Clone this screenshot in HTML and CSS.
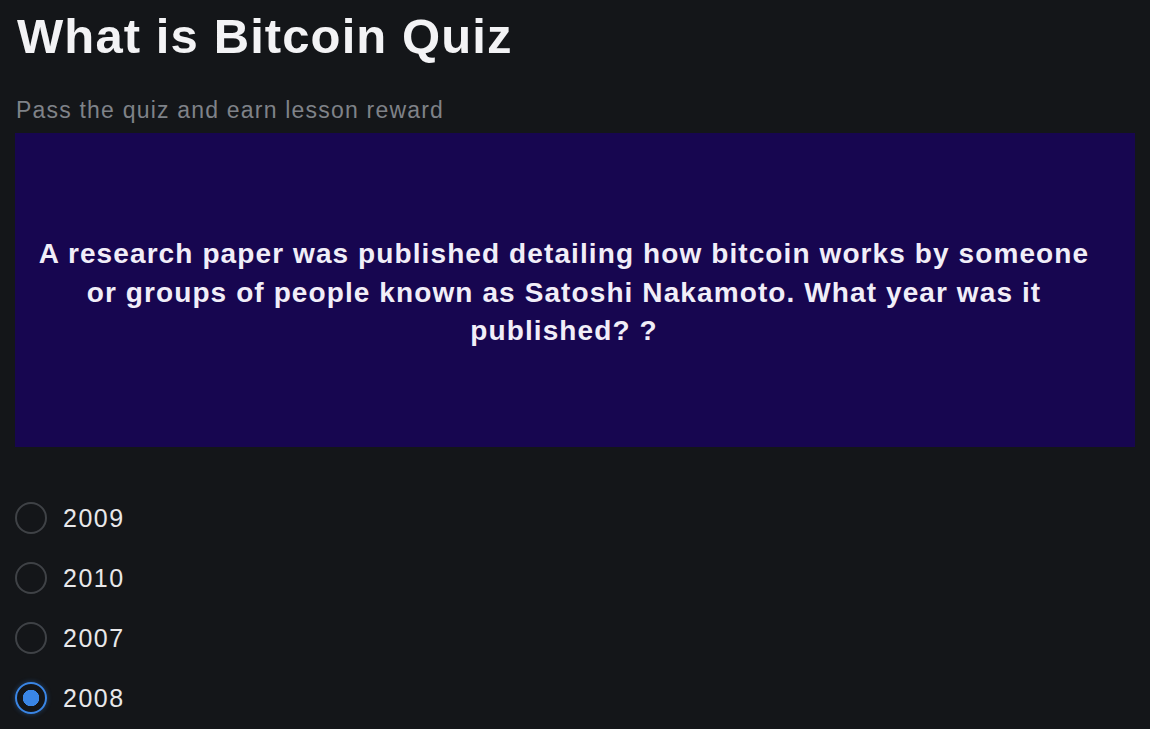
FILE: index.html
```html
<!DOCTYPE html>
<html lang="en">
<head>
<meta charset="utf-8">
<title>What is Bitcoin Quiz</title>
<link rel="stylesheet" href="styles.css">
</head>
<body>
<main class="quiz">
  <h1 class="quiz-title">What is Bitcoin Quiz</h1>
  <p class="quiz-subtitle">Pass the quiz and earn lesson reward</p>
  <section class="question-card">
    <p class="question-text">A research paper was published detailing how bitcoin works by someone or groups of people known as Satoshi Nakamoto. What year was it published? ?</p>
  </section>
  <ul class="options">
    <li class="option"><span class="radio"></span><span class="option-label">2009</span></li>
    <li class="option"><span class="radio"></span><span class="option-label">2010</span></li>
    <li class="option"><span class="radio"></span><span class="option-label">2007</span></li>
    <li class="option"><span class="radio radio-checked"></span><span class="option-label">2008</span></li>
  </ul>
</main>
</body>
</html>
```

FILE: styles.css
```css
html, body {
  margin: 0;
  padding: 0;
  background: #141619;
}
body {
  font-family: "Liberation Sans", Arial, Helvetica, sans-serif;
  color: #f2f2f4;
}
.quiz {
  padding: 7px 15px 0 15px;
}
.quiz-title {
  margin: 0;
  font-size: 49px;
  line-height: 58px;
  font-weight: 700;
  letter-spacing: 1.1px;
  color: #f3f3f5;
  padding-left: 2px;
}
.quiz-subtitle {
  margin: 30px 0 0 0;
  font-size: 23px;
  line-height: 30px;
  letter-spacing: 1.2px;
  color: #7f8288;
  padding-left: 1px;
}
.question-card {
  box-sizing: border-box;
  margin-top: 8px;
  height: 314px;
  background: #170650;
  display: flex;
  align-items: center;
  justify-content: center;
  padding: 6px 42px 0 20px;
}
.question-text {
  margin: 0;
  text-align: center;
  font-size: 28px;
  line-height: 38.5px;
  font-weight: 700;
  letter-spacing: 1.1px;
  color: #f1eef8;
}
.options {
  list-style: none;
  margin: 41px 0 0 0;
  padding: 0;
}
.option {
  display: flex;
  align-items: center;
  height: 60px;
  gap: 16px;
}
.radio {
  box-sizing: border-box;
  width: 32px;
  height: 32px;
  border-radius: 50%;
  border: 2px solid #3f4246;
  flex: none;
}
.radio-checked {
  border-color: #3a86e6;
  background: radial-gradient(circle, #3a86e6 0 8px, #141619 8.5px);
  box-shadow: 0 0 5px rgba(58, 134, 230, 0.4);
}
.option-label {
  font-size: 25px;
  letter-spacing: 1.5px;
  color: #e8e8ea;
}
```
